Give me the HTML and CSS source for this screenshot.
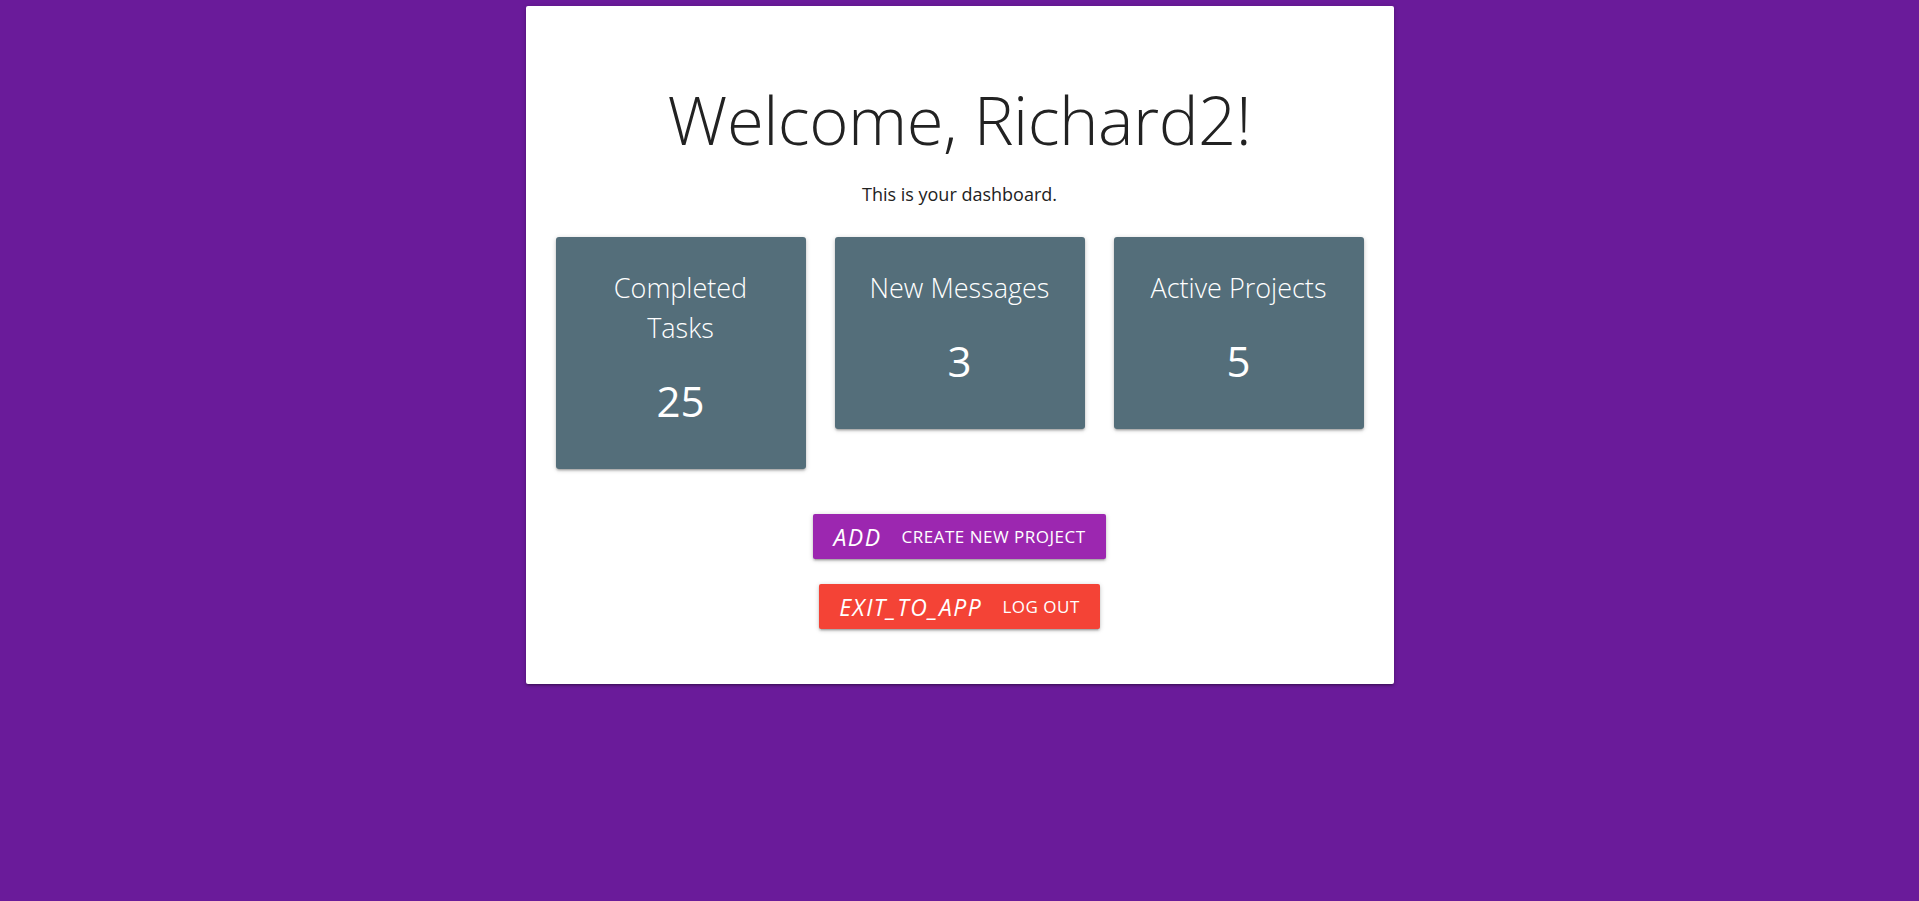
FILE: index.html
```html
<!DOCTYPE html>
<html lang="en">
<head>
<meta charset="utf-8">
<title>Dashboard</title>
<link rel="stylesheet" href="styles.css">
</head>
<body>
  <main class="panel">
    <h1 class="welcome">Welcome, Richard2!</h1>
    <p class="subtitle">This is your dashboard.</p>
    <section class="stats">
      <div class="stat">
        <div class="stat-title">Completed Tasks</div>
        <div class="stat-value">25</div>
      </div>
      <div class="stat">
        <div class="stat-title">New Messages</div>
        <div class="stat-value">3</div>
      </div>
      <div class="stat">
        <div class="stat-title">Active Projects</div>
        <div class="stat-value">5</div>
      </div>
    </section>
    <div class="actions">
      <button class="btn btn-purple"><i class="btn-icon">add</i><span class="btn-label">Create New Project</span></button>
      <button class="btn btn-red"><i class="btn-icon">exit_to_app</i><span class="btn-label">Log Out</span></button>
    </div>
  </main>
</body>
</html>
```
FILE: styles.css
```css
html, body {
  margin: 0;
  padding: 0;
}

body {
  background: #6a1b9a;
  min-height: 100vh;
  font-family: "Open Sans", "Noto Sans", sans-serif;
  padding-top: 6px;
  box-sizing: border-box;
}

.panel {
  width: 868px;
  margin: 0 auto;
  background: #fff;
  border-radius: 2px;
  box-shadow: 0 2px 2px 0 rgba(0,0,0,.14), 0 3px 1px -2px rgba(0,0,0,.12), 0 1px 5px 0 rgba(0,0,0,.2);
  padding: 76px 32px 55px;
  box-sizing: border-box;
  text-align: center;
}

.welcome {
  margin: 0;
  font-size: 67px;
  line-height: 74px;
  font-weight: 300;
  color: #222;
  letter-spacing: -0.5px;
}

.subtitle {
  margin: 23px 0 0;
  font-size: 18px;
  line-height: 30px;
  color: #222;
}

.stats {
  display: grid;
  grid-template-columns: repeat(3, 250px);
  column-gap: 29px;
  justify-content: center;
  align-items: start;
  margin-top: 28px;
}

.stat {
  background: #546e7a;
  color: #fff;
  border-radius: 3px;
  padding: 31px 28px 43px;
  box-shadow: 0 2px 2px 0 rgba(0,0,0,.14), 0 3px 1px -2px rgba(0,0,0,.12), 0 1px 5px 0 rgba(0,0,0,.2);
}

.stat-title {
  font-size: 27px;
  line-height: 40px;
  font-weight: 300;
}

.stat-value {
  margin-top: 28px;
  font-size: 42px;
  line-height: 50px;
  font-weight: 400;
}

.actions {
  display: flex;
  flex-direction: column;
  align-items: center;
  gap: 25px;
  margin-top: 45px;
}

.btn {
  display: inline-flex;
  align-items: center;
  gap: 20px;
  height: 45px;
  padding: 0 20px;
  border: none;
  border-radius: 2px;
  color: #fff;
  font-family: "Open Sans", "Noto Sans", sans-serif;
  text-transform: uppercase;
  box-shadow: 0 2px 2px 0 rgba(0,0,0,.14), 0 3px 1px -2px rgba(0,0,0,.12), 0 1px 5px 0 rgba(0,0,0,.2);
  cursor: pointer;
}

.btn-icon {
  font-style: italic;
  font-size: 23px;
  letter-spacing: 1.5px;
}

.btn-label {
  font-size: 17px;
  letter-spacing: 0.5px;
}

.btn-purple {
  background: #9c27b0;
}

.btn-red {
  background: #f44336;
}
```
